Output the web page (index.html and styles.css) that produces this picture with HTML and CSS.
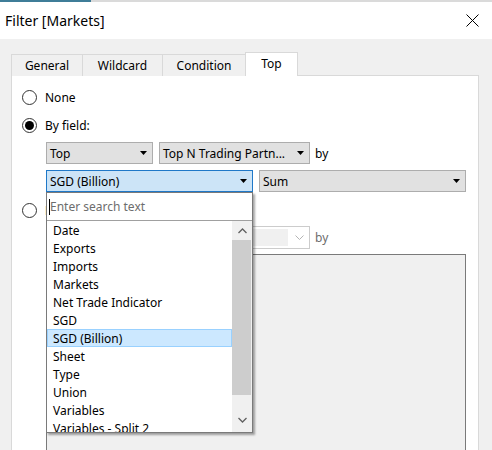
FILE: index.html
```html
<!DOCTYPE html>
<html>
<head>
<meta charset="utf-8">
<link rel="stylesheet" href="styles.css">
</head>
<body>
<div class="window">
  <div class="accent"><span class="accent-fill"></span></div>
  <div class="titlebar">
    <span class="title">Filter [Markets]</span>
    <svg class="close" width="13" height="13" viewBox="0 0 13 13"><path d="M0.5 0.5 L12.5 12.5 M12.5 0.5 L0.5 12.5" stroke="#000" stroke-width="1" fill="none"/></svg>
  </div>
  <div class="body">
    <div class="tabs">
      <div class="tab t-general">General</div>
      <div class="tab t-wildcard">Wildcard</div>
      <div class="tab t-condition">Condition</div>
      <div class="tab t-top active">Top</div>
    </div>
    <div class="panel">
      <div class="radio-row r1"><span class="radio"></span><span class="label">None</span></div>
      <div class="radio-row r2"><span class="radio checked"><span class="dot"></span></span><span class="label">By field:</span></div>
      <div class="combo-row row1">
        <div class="combo w-top"><span class="ctext">Top</span><svg class="arrow" width="7" height="4" viewBox="0 0 7 4"><polygon points="0,0 7,0 3.5,4" fill="#000"/></svg></div>
        <div class="combo w-n"><span class="ctext">Top N Trading Partn...</span><svg class="arrow" width="7" height="4" viewBox="0 0 7 4"><polygon points="0,0 7,0 3.5,4" fill="#000"/></svg></div>
        <span class="by">by</span>
      </div>
      <div class="combo-row row2">
        <div class="combo focus w-field"><span class="ctext">SGD (Billion)</span><svg class="arrow" width="7" height="4" viewBox="0 0 7 4"><polygon points="0,0 7,0 3.5,4" fill="#000"/></svg></div>
        <div class="combo w-agg"><span class="ctext">Sum</span><svg class="arrow" width="7" height="4" viewBox="0 0 7 4"><polygon points="0,0 7,0 3.5,4" fill="#000"/></svg></div>
      </div>
      <div class="radio-row r3"><span class="radio"></span><span class="label">By formula:</span></div>
      <div class="combo-row row3">
        <div class="combo disabled w-top"><span class="ctext">Top</span></div>
        <div class="editcombo w-n"><span class="efield"></span><svg class="chev" width="9" height="5" viewBox="0 0 9 5"><path d="M0.5 0.5 L4.5 4.5 L8.5 0.5" stroke="#b4b4b4" fill="none"/></svg></div>
        <span class="by dim">by</span>
      </div>
      <div class="formula"></div>

      <div class="popup">
        <div class="search"><span class="caret"></span><span class="placeholder">Enter search text</span></div>
        <div class="listwrap">
          <ul class="list">
            <li>Date</li>
            <li>Exports</li>
            <li>Imports</li>
            <li>Markets</li>
            <li>Net Trade Indicator</li>
            <li>SGD</li>
            <li class="sel">SGD (Billion)</li>
            <li>Sheet</li>
            <li>Type</li>
            <li>Union</li>
            <li>Variables</li>
            <li>Variables - Split 2</li>
          </ul>
          <div class="scrollbar">
            <svg class="sb-arrow up" width="9" height="6" viewBox="0 0 9 6"><path d="M0.5 5 L4.5 1 L8.5 5" stroke="#606060" stroke-width="1.3" fill="none"/></svg>
            <div class="thumb"></div>
            <svg class="sb-arrow down" width="9" height="6" viewBox="0 0 9 6"><path d="M0.5 1 L4.5 5 L8.5 1" stroke="#606060" stroke-width="1.3" fill="none"/></svg>
          </div>
        </div>
      </div>
    </div>
  </div>
</div>
</body>
</html>
```
FILE: styles.css
```css
* { box-sizing: border-box; }
html, body { margin: 0; padding: 0; }
body {
  font-family: "Noto Sans", "Open Sans", sans-serif;
  font-size: 12px;
  color: #000;
  background: #f0f0f0;
}
.window {
  width: 492px;
  height: 450px;
  overflow: hidden;
  display: flex;
  flex-direction: column;
}
.accent {
  flex: none;
  height: 2px;
  background: #dadada;
  display: flex;
}
.accent-fill {
  width: 91px;
  background: #3f7d98;
}
.titlebar {
  flex: none;
  height: 37px;
  background: #fff;
  display: flex;
  align-items: center;
  justify-content: space-between;
  padding: 0 13px 0 5px;
}
.title {
  font-size: 14px;
  margin-top: -1px;
}
.close { display: block; margin-top: 0px; }
.body {
  flex: 1;
  min-height: 0;
  overflow: hidden;
  background: #f0f0f0;
  padding: 13px 13px 0 11px;
}
.tabs {
  display: flex;
  align-items: flex-end;
  height: 24px;
  position: relative;
  z-index: 2;
  margin-bottom: -1px;
}
.tab {
  height: 22px;
  border: 1px solid #d9d9d9;
  border-bottom: none;
  margin-right: -1px;
  background: #f0f0f0;
  display: flex;
  align-items: center;
  justify-content: center;
  padding-bottom: 1px;
}
.t-general { width: 72px; }
.t-wildcard { width: 81px; }
.t-condition { width: 84px; }
.t-top { width: 53px; }
.tab.active {
  height: 24px;
  background: #fff;
  padding-bottom: 3px;
}
.panel {
  position: relative;
  background: #fff;
  border: 1px solid #d9d9d9;
  height: 400px;
  padding-top: 14px;
}
.radio-row {
  display: flex;
  align-items: center;
  height: 15px;
  margin-left: 10px;
}
.r2 { margin-top: 13px; }
.r3 { margin-top: 11px; }
.radio {
  width: 15px;
  height: 15px;
  border: 1px solid #333;
  border-radius: 50%;
  background: #fff;
  display: flex;
  align-items: center;
  justify-content: center;
  margin-right: 8px;
  flex: none;
}
.radio .dot {
  width: 9px;
  height: 9px;
  border-radius: 50%;
  background: #000;
}
.label { line-height: 15px; }
.combo-row {
  display: flex;
  align-items: center;
  margin-left: 34px;
  gap: 6px;
}
.row1 { margin-top: 9px; }
.row2 { margin-top: 6px; }
.row3 { margin-top: 8px; }
.combo {
  height: 22px;
  background: #e1e1e1;
  border: 1px solid #adadad;
  display: flex;
  align-items: center;
  justify-content: space-between;
  padding: 0 5px 0 3px;
}
.combo .ctext { white-space: nowrap; }
.combo.focus {
  background: #cce4f7;
  border-color: #1f78c8;
}
.combo.disabled {
  background: #f0f0f0;
  border-color: #cccccc;
  color: #838383;
}
.arrow { display: block; flex: none; }
.w-top { width: 107px; }
.w-n { width: 151px; }
.w-field { width: 207px; }
.w-agg { width: 207px; }
.by { margin-left: -1px; }
.by.dim { color: #6d6d6d; }
.editcombo {
  height: 23px;
  border: 1px solid #cccccc;
  background: #fff;
  display: flex;
  align-items: center;
  padding: 2px 5px 2px 2px;
  gap: 7px;
}
.efield {
  flex: 1;
  height: 17px;
  background: #f0f0f0;
}
.chev { display: block; }
.formula {
  margin-left: 34px;
  margin-top: 5px;
  width: 420px;
  height: 200px;
  border: 1px solid #7a7a7a;
  background: #f0f0f0;
}
.popup {
  position: absolute;
  left: 34px;
  top: 116px;
  width: 207px;
  height: 241px;
  background: #fff;
  border: 1px solid #7a7a7a;
  box-shadow: 2px 2px 2px rgba(0,0,0,0.35);
  display: flex;
  flex-direction: column;
  z-index: 5;
}
.search {
  height: 28px;
  border-bottom: 1px solid #a0a0a0;
  display: flex;
  align-items: center;
  padding-left: 2px;
}
.caret {
  width: 1px;
  height: 16px;
  background: #000;
  margin-right: 0px;
}
.placeholder { color: #6d6d6d; }
.listwrap {
  flex: 1;
  display: flex;
  overflow: hidden;
}
.list {
  list-style: none;
  margin: 0;
  padding: 0;
  flex: 1;
  overflow: hidden;
}
.list li {
  height: 18px;
  line-height: 17px;
  padding-left: 5px;
  border: 1px solid transparent;
  white-space: nowrap;
}
.list li.sel {
  background: #cce8ff;
  border-color: #99d1ff;
}
.scrollbar {
  width: 20px;
  background: #f0f0f0;
  display: flex;
  flex-direction: column;
  align-items: center;
}
.sb-arrow {
  display: block;
  flex: none;
}
.sb-arrow.up { margin: 7px 0; }
.sb-arrow.down { margin: auto 0 9px; }
.thumb {
  width: 19px;
  align-self: flex-start;
  height: 155px;
  background: #cdcdcd;
  margin-top: -1px;
}
```
